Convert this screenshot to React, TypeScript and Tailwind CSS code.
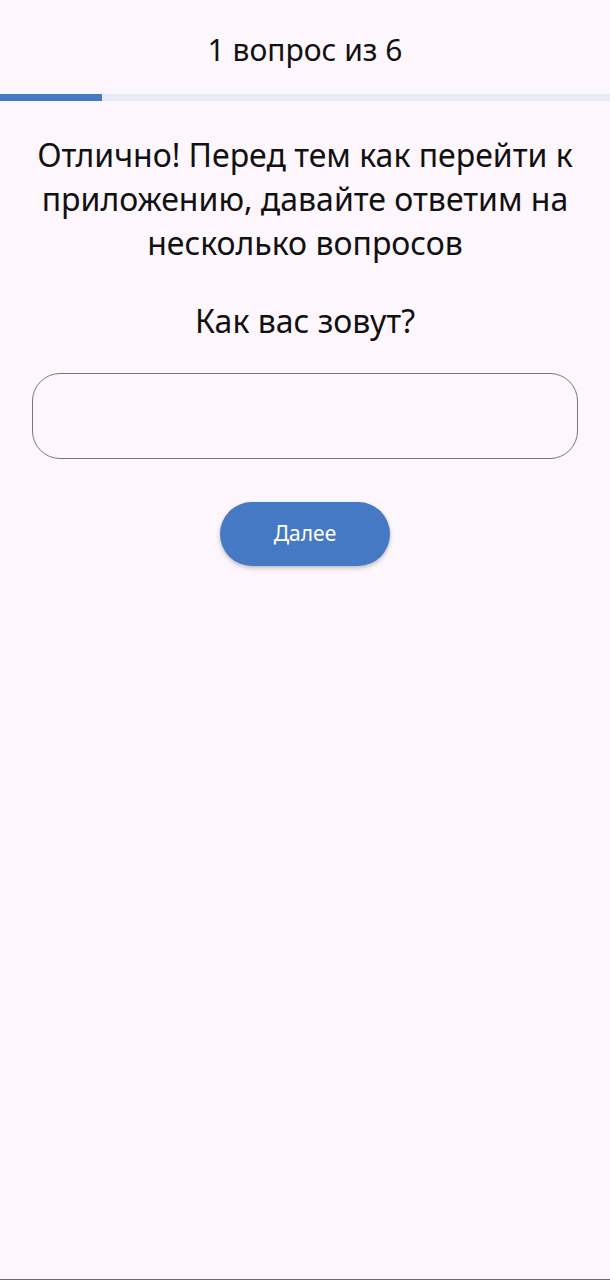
export default function App() {
  return (
    <div className="min-h-[1280px] w-[610px] bg-[#fdf7fd] flex flex-col border-b border-[#6b6b6b] text-[#111]" style={{ fontFamily: '"Noto Sans", "Open Sans", sans-serif' }}>
      <div className="h-[94px] flex items-center justify-center pt-[6px] text-[30px] leading-none">1 вопрос из 6</div>
      <div className="h-[7px] bg-[#e8eaf6] flex">
        <div className="w-[102px] bg-[#4679c3]" />
      </div>
      <div className="px-[20px] pt-[32px] text-center text-[32px] leading-[44px]">
        Отлично! Перед тем как перейти к приложению, давайте ответим на несколько вопросов
      </div>
      <div className="mt-[34px] text-center text-[32px] leading-[44px]">Как вас зовут?</div>
      <div className="px-[32px] mt-[30px]">
        <div className="h-[86px] rounded-[28px] border border-[#79747e]" />
      </div>
      <div className="flex justify-center mt-[43px]">
        <button className="w-[170px] h-[64px] rounded-full bg-[#4679c3] text-white text-[21px] shadow-[0_2px_4px_rgba(0,0,0,0.25)]">Далее</button>
      </div>
    </div>
  );
}
